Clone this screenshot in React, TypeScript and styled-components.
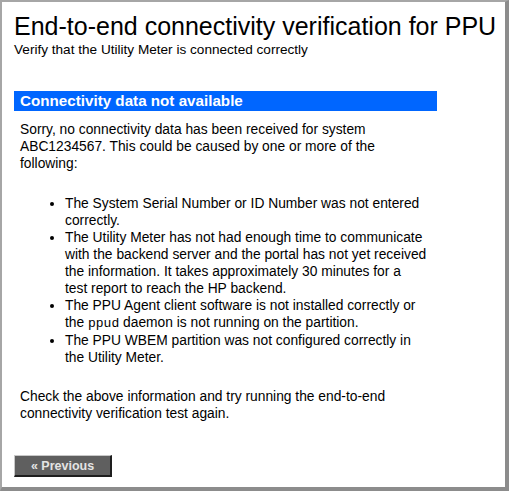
import React from "react";
import styled, { createGlobalStyle } from "styled-components";

const Global = createGlobalStyle`
  html, body { margin: 0; padding: 0; background: #ffffff; }
  body { font-family: "Liberation Sans", Arial, sans-serif; color: #000; }
`;

const Frame = styled.div`
  box-sizing: border-box;
  width: 509px;
  height: 491px;
  border-top: 2px solid #a6a6a6;
  border-left: 2px solid #a6a6a6;
  border-right: 4px solid #8c8c8c;
  border-bottom: 4px solid #8c8c8c;
  padding: 10px 0 0 12px;
  display: flex;
  flex-direction: column;
  overflow: hidden;
`;

const Title = styled.h1`
  margin: 0;
  font-size: 25px;
  font-weight: normal;
  line-height: 28px;
  white-space: nowrap;
`;

const Subtitle = styled.div`
  font-size: 13.6px;
  line-height: 16px;
  margin-top: 2px;
  white-space: nowrap;
`;

const SectionBar = styled.div`
  margin-top: 33px;
  width: 423px;
  height: 20px;
  background: #0066ff;
  color: #ffffff;
  font-size: 15.2px;
  font-weight: bold;
  line-height: 20px;
  padding-left: 6px;
  box-sizing: border-box;
  white-space: nowrap;
`;

const Body = styled.div`
  padding-left: 6px;
  width: 470px;
  font-size: 13.8px;
  line-height: 17px;
`;

const Para = styled.p`
  margin: 10px 0 0 0;
`;

const List = styled.ul`
  margin: 23px 0 0 0;
  padding-left: 45px;
  list-style: disc;
`;

const Code = styled.span`
  font-family: "Liberation Mono", "Courier New", monospace;
  font-size: 13px;
`;

const Closing = styled.p`
  margin: 22px 0 0 0;
`;

const Button = styled.button`
  margin-top: 33px;
  width: 98px;
  height: 22px;
  background: #5f5f5f;
  color: #e4e4e4;
  font-family: "Liberation Sans", Arial, sans-serif;
  font-size: 12.5px;
  font-weight: bold;
  border-top: 1px solid #c8c8c8;
  border-left: 1px solid #c8c8c8;
  border-right: 2px solid #1e1e1e;
  border-bottom: 2px solid #1e1e1e;
  padding: 0;
  cursor: pointer;
  align-self: flex-start;
`;

export default function App() {
  return (
    <>
      <Global />
      <Frame>
        <Title>End-to-end connectivity verification for PPU</Title>
        <Subtitle>Verify that the Utility Meter is connected correctly</Subtitle>
        <SectionBar>Connectivity data not available</SectionBar>
        <Body>
          <Para>
            Sorry, no connectivity data has been received for system
            <br />
            ABC1234567. This could be caused by one or more of the
            <br />
            following:
          </Para>
          <List>
            <li>
              The System Serial Number or ID Number was not entered
              <br />
              correctly.
            </li>
            <li>
              The Utility Meter has not had enough time to communicate
              <br />
              with the backend server and the portal has not yet received
              <br />
              the information. It takes approximately 30 minutes for a
              <br />
              test report to reach the HP backend.
            </li>
            <li>
              The PPU Agent client software is not installed correctly or
              <br />
              the <Code>ppud</Code> daemon is not running on the partition.
            </li>
            <li>
              The PPU WBEM partition was not configured correctly in
              <br />
              the Utility Meter.
            </li>
          </List>
          <Closing>
            Check the above information and try running the end-to-end
            <br />
            connectivity verification test again.
          </Closing>
        </Body>
        <Button>« Previous</Button>
      </Frame>
    </>
  );
}
